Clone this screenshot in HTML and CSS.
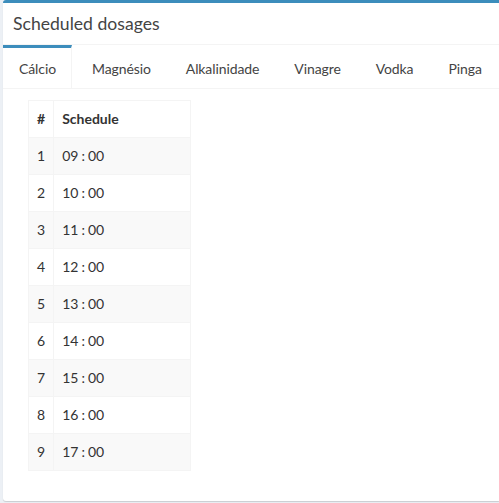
FILE: index.html
```html
<!DOCTYPE html>
<html>
<head>
<meta charset="utf-8">
<link rel="stylesheet" href="styles.css">
</head>
<body>
<div class="page">
  <div class="box">
    <div class="box-header"><h3 class="box-title">Scheduled dosages</h3></div>
    <ul class="tabs">
      <li class="tab active">Cálcio</li>
      <li class="tab">Magnésio</li>
      <li class="tab">Alkalinidade</li>
      <li class="tab">Vinagre</li>
      <li class="tab">Vodka</li>
      <li class="tab">Pinga</li>
    </ul>
    <div class="tab-content">
      <table class="sched">
        <thead><tr><th class="num">#</th><th class="time">Schedule</th></tr></thead>
        <tbody>
          <tr><td class="num">1</td><td>09<span class="c">:</span>00</td></tr>
          <tr><td class="num">2</td><td>10<span class="c">:</span>00</td></tr>
          <tr><td class="num">3</td><td>11<span class="c">:</span>00</td></tr>
          <tr><td class="num">4</td><td>12<span class="c">:</span>00</td></tr>
          <tr><td class="num">5</td><td>13<span class="c">:</span>00</td></tr>
          <tr><td class="num">6</td><td>14<span class="c">:</span>00</td></tr>
          <tr><td class="num">7</td><td>15<span class="c">:</span>00</td></tr>
          <tr><td class="num">8</td><td>16<span class="c">:</span>00</td></tr>
          <tr><td class="num">9</td><td>17<span class="c">:</span>00</td></tr>
        </tbody>
      </table>
    </div>
  </div>
</div>
</body>
</html>
```

FILE: styles.css
```css
html, body {
  margin: 0;
  padding: 0;
  background: #ecf0f5;
  overflow: hidden;
  height: 503px;
}
body {
  font-family: Lato, "Liberation Sans", sans-serif;
  font-size: 14px;
  color: #333;
}
.page {
  padding-left: 3px;
}
.box {
  background: #fff;
  border-top: 3px solid #3c8dbc;
  border-radius: 3px 0 0 3px;
  box-shadow: 0 1px 1px rgba(0,0,0,0.15);
  height: 498px;
}
.box-header {
  border-bottom: 1px solid #f4f4f4;
  box-sizing: border-box;
  padding: 0 10px;
  display: flex;
  align-items: center;
  height: 42px;
}
.box-title {
  margin: 0;
  font-size: 17.6px;
  font-weight: 400;
  color: #444;
  line-height: 1.1;
}
.tabs {
  list-style: none;
  margin: 0;
  padding: 0;
  display: flex;
  border-bottom: 1px solid #f4f4f4;
  height: 44px;
  box-sizing: border-box;
  overflow: hidden;
}
.tab {
  color: #444;
  padding: 0 15px;
  height: 40px;
  margin-top: 3px;
  display: flex;
  align-items: center;
  margin-right: 5px;
  box-sizing: border-box;
  white-space: nowrap;
  letter-spacing: -0.1px;
}
.tab.active {
  margin-top: 0;
  border-top: 3px solid #3c8dbc;
  border-right: 1px solid #f4f4f4;
  padding: 0 15px 0 16px;
  background: #fff;
  height: 44px;
}
.tab-content {
  padding: 11px 25px;
}
.sched {
  border-collapse: collapse;
  border: 1px solid #f4f4f4;
  width: 163px;
}
.sched th, .sched td {
  border: 1px solid #f4f4f4;
  padding: 8px;
  line-height: 20px;
  text-align: left;
}
.sched th {
  font-weight: 700;
  color: #333;
}
.sched .num {
  width: 6px;
}
.sched tbody tr:nth-child(odd) {
  background: #f9f9f9;
}
.c {
  padding: 0 3px;
}
```
